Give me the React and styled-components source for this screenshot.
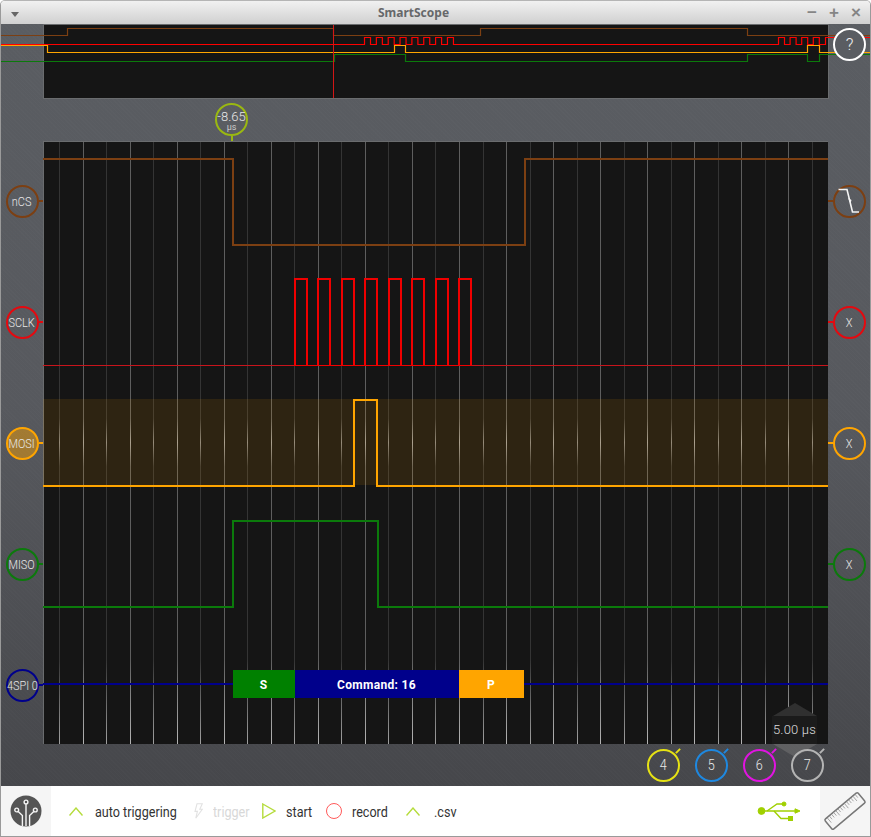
import React from "react";
import styled, { createGlobalStyle } from "styled-components";

const GlobalStyle = createGlobalStyle`
  html, body {
    margin: 0;
    padding: 0;
    background: #fff;
  }
`;

const THIN = `"Roboto", "Liberation Sans", sans-serif`;

const BROWN = "#7c3f12";
const RED = "#f00000";
const ORANGE = "#ffa500";
const GREEN = "#0b7a0b";
const NAVY = "#00008b";
const LIME = "#b5dc3c";

const gridXs = Array.from({ length: 33 }, (_, i) => 59.5 + i * 23.53);

function pulses(start, period, width, count, low, high) {
  let d = "";
  for (let i = 0; i < count; i++) {
    const x = start + i * period;
    d += ` L${x} ${low} L${x} ${high} L${x + width} ${high} L${x + width} ${low}`;
  }
  return d;
}

const overviewTraces = [
  { color: BROWN, d: "M1 35.5 L67.5 35.5 L67.5 28.5 L333.5 28.5 L333.5 35.5 L480.5 35.5 L480.5 28.5 L747.5 28.5 L747.5 35.5 L871 35.5" },
  { color: ORANGE, d: "M1 45.5 L47.5 45.5 L47.5 52.5 L394.5 52.5 L394.5 45.5 L405.5 45.5 L405.5 52.5 L807.5 52.5 L807.5 45.5 L819.5 45.5 L819.5 52.5 L871 52.5" },
  { color: "#f00", d: "M1 44.5" + pulses(364.5, 11.85, 6, 8, 44.5, 37.5) + " L778.5 44.5" + pulses(778.5, 11.6, 6, 4, 44.5, 37.5) + " L825.5 44.5 L825.5 37.5 L871 37.5" },
  { color: GREEN, d: "M1 61.5 L334.5 61.5 L334.5 54.5 L405.5 54.5 L405.5 61.5 L747.5 61.5 L747.5 54.5 L807.5 54.5 L807.5 61.5 L819.5 61.5 L819.5 54.5 L871 54.5" },
];

const scopeTraces = [
  { color: BROWN, d: "M0 18 L190 18 L190 104 L482 104 L482 18 L785 18" },
  { color: ORANGE, d: "M0 345 L311 345 L311 259 L334 259 L334 345 L785 345" },
  { color: GREEN, d: "M0 466 L190 466 L190 380 L335 380 L335 466 L785 466" },
];

// rising and falling edges of the clock burst
const clockEdges = [
  [252, 264], [275, 287], [299, 311], [322, 334],
  [346, 358], [369, 381], [393, 405], [416, 428],
];

const leftChannels = [
  { label: "nCS", color: BROWN },
  { label: "SCLK", color: "#e5090f" },
  { label: "MOSI", color: ORANGE, fill: "rgba(255,165,0,0.45)" },
  { label: "MISO", color: GREEN },
  { label: "4SPI 0", color: NAVY },
];

const decoded = [
  { x: 190, w: 62, color: "#008000", label: "S" },
  { x: 252, w: 164, color: NAVY, label: "Command: 16" },
  { x: 416, w: 65, color: ORANGE, label: "P" },
];

function TriggerEdge() {
  return (
    <svg width="28" height="30" viewBox="0 0 28 30">
      <path d="M3.5 2.5 L12 2.5 L17.5 25 L24 25" fill="none" stroke="#f4f4f4" strokeWidth="1.6" />
      <path d="M13 11 L16.5 13 L15.5 16.5 Z" fill="#f4f4f4" />
    </svg>
  );
}

function LogoIcon() {
  return (
    <svg width="32" height="32" viewBox="0 0 32 32">
      <circle cx="16" cy="16" r="15.5" fill="#555" />
      <g fill="none" stroke="#f5f5f5" strokeWidth="1.4">
        <circle cx="16" cy="7" r="1.9" />
        <circle cx="6.7" cy="15" r="1.9" />
        <circle cx="25.3" cy="15" r="1.9" />
        <path d="M16 9 L16 31" />
        <path d="M8.2 16.5 L12.4 20.5 L12.4 31" />
        <path d="M23.8 16.5 L19.6 20.5 L19.6 31" />
      </g>
    </svg>
  );
}

function UsbIcon() {
  return (
    <svg width="44" height="26" viewBox="0 0 44 26">
      <g fill="#a0d000" stroke="#a0d000">
        <circle cx="4.5" cy="13" r="3.4" />
        <path d="M4 13 L40 13" strokeWidth="1.4" />
        <path d="M38 10.8 L43 13 L38 15.2 Z" />
        <path d="M10 13 L20 6 L26 6" fill="none" strokeWidth="1.4" />
        <circle cx="27" cy="6" r="2" />
        <path d="M17 13 L24 20.5 L31 20.5" fill="none" strokeWidth="1.4" />
        <rect x="31.5" y="18.5" width="4" height="4" />
      </g>
    </svg>
  );
}

function RulerIcon() {
  const ticks = Array.from({ length: 14 }, (_, i) => i);
  return (
    <svg width="44" height="44" viewBox="0 0 44 44">
      <g transform="rotate(-40 22 22)">
        <rect x="0.5" y="15.5" width="43" height="13" rx="1.5" fill="none" stroke="#777" strokeWidth="1.5" />
        {ticks.map((i) => (
          <path key={i} d={`M${4 + i * 2.8} 16 L${4 + i * 2.8} ${i % 4 === 0 ? 22 : 20}`} stroke="#999" strokeWidth="0.8" />
        ))}
      </g>
    </svg>
  );
}

function Chevron({ gap }) {
  return (
    <Glyph $gap={gap} width="14" height="9" viewBox="0 0 14 9">
      <path d="M0.5 8.5 L7 1 L13.5 8.5" fill="none" stroke={LIME} strokeWidth="1.4" />
    </Glyph>
  );
}

function App() {
  return (
    <>
      <GlobalStyle />
      <Window>
        <TitleBar>
          <MenuArrow />
          <Title>SmartScope</Title>
          <WindowButtons>
            <WindowButton>−</WindowButton>
            <WindowButton>+</WindowButton>
            <WindowButton>×</WindowButton>
          </WindowButtons>
        </TitleBar>

        <Stage>
          <Overview>
            <OverviewSvg width="871" height="75" viewBox="0 24 871 75">
              <rect x="43.5" y="24.5" width="785" height="74" fill="#151515" stroke="#6a6c6e" />
              {overviewTraces.map((t) => (
                <path key={t.color} d={t.d} fill="none" stroke={t.color} strokeWidth="1.2" />
              ))}
              <path d="M333.5 25 L333.5 98" stroke="#d21616" strokeWidth="1" />
            </OverviewSvg>
            <HelpButton>?</HelpButton>
          </Overview>

          <CursorRow>
            <CursorBadge>
              <strong>-8.65</strong>
              <small>µs</small>
            </CursorBadge>
          </CursorRow>

          <ScopeRow>
            <ChannelColumn>
              {leftChannels.map((c) => (
                <ChannelKnob key={c.label} $color={c.color} $fill={c.fill} $side="right">
                  <Squeezed>{c.label}</Squeezed>
                </ChannelKnob>
              ))}
            </ChannelColumn>

            <Plot>
              <svg width="785" height="603" viewBox="0 0 785 603">
                <defs>
                  <linearGradient id="gridLine" x1="0" y1="0" x2="0" y2="1">
                    <stop offset="0" stopColor="#5e5e5e" />
                    <stop offset="0.46" stopColor="#5e5e5e" />
                    <stop offset="0.5" stopColor="#a0a0a0" />
                    <stop offset="0.54" stopColor="#5e5e5e" />
                    <stop offset="0.86" stopColor="#5e5e5e" />
                    <stop offset="1" stopColor="#b4b4b4" />
                  </linearGradient>
                  <linearGradient id="gridLineDim" x1="0" y1="0" x2="0" y2="1">
                    <stop offset="0" stopColor="#343434" />
                    <stop offset="0.46" stopColor="#343434" />
                    <stop offset="0.5" stopColor="#888" />
                    <stop offset="0.54" stopColor="#343434" />
                    <stop offset="0.86" stopColor="#343434" />
                    <stop offset="1" stopColor="#a0a0a0" />
                  </linearGradient>
                </defs>
                <rect width="785" height="603" fill="#151515" />
                {gridXs.map((x, i) => (
                  <rect
                    key={x}
                    x={Math.floor(x) - 43}
                    y="0"
                    width="1"
                    height="603"
                    fill={i % 2 ? "url(#gridLine)" : "url(#gridLineDim)"}
                  />
                ))}
                <rect x="0" y="0" width="785" height="1" fill="#6a6c6e" />
                <rect x="0" y="0" width="1" height="603" fill="#6a6c6e" />
                <rect x="0" y="258" width="785" height="86" fill="rgba(255,165,0,0.11)" />
                <path d="M0 224.5 L785 224.5" stroke="#c8141c" />
                <path d="M252 224.5 L428 224.5" stroke={RED} />
                {scopeTraces.map((t) => (
                  <path key={t.color} d={t.d} fill="none" stroke={t.color} strokeWidth="2" />
                ))}
                {clockEdges.map(([a, b]) => (
                  <path key={a} d={`M${a} 225 L${a} 138 L${b} 138 L${b} 225`} fill="none" stroke={RED} strokeWidth="2" />
                ))}
                <path d="M0 543 L785 543" stroke={NAVY} strokeWidth="2" />
                {decoded.map((s) => (
                  <g key={s.label}>
                    <rect x={s.x} y="529" width={s.w} height="28" fill={s.color} />
                    <DecodeText x={s.x + s.w / 2 - 0.5} y="547.5" textAnchor="middle">
                      {s.label}
                    </DecodeText>
                  </g>
                ))}
              </svg>
              <TimeScale>
                <ScaleArrowUp />
                <ScaleValue>5.00 µs</ScaleValue>
                <ScaleArrowDown />
              </TimeScale>
            </Plot>

            <ChannelColumn>
              <ChannelKnob $color={BROWN} $side="left">
                <TriggerEdge />
              </ChannelKnob>
              <ChannelKnob $color="#e5090f" $side="left"><Squeezed>X</Squeezed></ChannelKnob>
              <ChannelKnob $color={ORANGE} $side="left"><Squeezed>X</Squeezed></ChannelKnob>
              <ChannelKnob $color={GREEN} $side="left"><Squeezed>X</Squeezed></ChannelKnob>
              <KnobSpacer />
            </ChannelColumn>
          </ScopeRow>

          <AnalogRow>
            <AnalogKnob $color="#e6e214"><Squeezed>4</Squeezed></AnalogKnob>
            <AnalogKnob $color="#1e88e0"><Squeezed>5</Squeezed></AnalogKnob>
            <AnalogKnob $color="#e014e0"><Squeezed>6</Squeezed></AnalogKnob>
            <AnalogKnob $color="#b4b4b4"><Squeezed>7</Squeezed></AnalogKnob>
          </AnalogRow>
        </Stage>

        <Toolbar>
          <IconTile>
            <LogoIcon />
          </IconTile>
          <Actions>
            <Action $width={125}>
              <Chevron gap={12} />
              <ActionLabel>auto triggering</ActionLabel>
            </Action>
            <Action $width={68} $disabled>
              <Glyph $gap={10} viewBox="0 0 9 16" width="9" height="16">
                <path d="M3 0.8 L8.3 0.8 L5.8 6.2 L8.3 6.2 L1.8 15.2 L3.4 8.4 L1 8.4 Z" fill="none" stroke="#e2e2e2" strokeWidth="1.1" />
              </Glyph>
              <ActionLabel>trigger</ActionLabel>
            </Action>
            <Action $width={64}>
              <Glyph $gap={10} viewBox="0 0 14 16" width="14" height="16">
                <path d="M0.8 1 L13 8 L0.8 15 Z" fill="none" stroke={LIME} strokeWidth="1.4" />
              </Glyph>
              <ActionLabel>start</ActionLabel>
            </Action>
            <Action $width={80}>
              <RecordGlyph />
              <ActionLabel>record</ActionLabel>
            </Action>
            <Action>
              <Chevron gap={14} />
              <ActionLabel>.csv</ActionLabel>
            </Action>
          </Actions>
          <UsbSlot>
            <UsbIcon />
          </UsbSlot>
          <IconTile>
            <RulerIcon />
          </IconTile>
        </Toolbar>
      </Window>
    </>
  );
}

const Window = styled.div`
  width: 871px;
  height: 837px;
  box-sizing: border-box;
  display: flex;
  flex-direction: column;
  overflow: hidden;
  border: 1px solid #9a9a9a;
  border-top-color: #b5b5b5;
  border-radius: 5px 5px 0 0;
  background: #fff;
`;

const TitleBar = styled.div`
  position: relative;
  flex: 0 0 23px;
  box-sizing: border-box;
  padding-right: 44px;
  display: flex;
  align-items: center;
  justify-content: center;
  background: linear-gradient(#f1f1f1, #d0d0d0);
`;

const MenuArrow = styled.span`
  position: absolute;
  left: 10px;
  top: 11px;
  border-left: 4px solid transparent;
  border-right: 4px solid transparent;
  border-top: 5px solid #666;
`;

const Title = styled.div`
  font: 700 12px "Noto Sans", "Open Sans", sans-serif;
  color: #66686a;
`;

const WindowButtons = styled.div`
  position: absolute;
  right: 3px;
  top: 0;
  height: 100%;
  display: flex;
`;

const WindowButton = styled.span`
  width: 22px;
  text-align: center;
  font: 700 17px/24px "Liberation Sans", sans-serif;
  color: #858585;
`;

const Stage = styled.div`
  flex: 1;
  position: relative;
  overflow: hidden;
  background:
    repeating-linear-gradient(45deg, rgba(255, 255, 255, 0.012) 0 1px, transparent 1px 3px),
    linear-gradient(#5a5d62, #57595e 50%, #46474b);
`;

const Overview = styled.div`
  position: relative;
  height: 75px;
`;

const OverviewSvg = styled.svg`
  position: absolute;
  left: -1px;
  top: 0;
`;

const HelpButton = styled.div`
  position: absolute;
  left: 832px;
  top: 4px;
  box-sizing: border-box;
  width: 33px;
  height: 33px;
  border: 2px solid #fff;
  border-radius: 50%;
  background: #5a5d62;
  text-align: center;
  font: 300 17px/28px ${THIN};
  color: #eee;
`;

const CursorRow = styled.div`
  height: 42px;
  box-sizing: border-box;
  padding: 4px 0 0 214px;
`;

const CursorBadge = styled.div`
  position: relative;
  box-sizing: border-box;
  width: 33px;
  height: 33px;
  border: 2px solid #9ab811;
  border-radius: 50%;
  display: flex;
  flex-direction: column;
  align-items: center;
  color: #e6e6e6;
  font-family: ${THIN};

  strong {
    font-weight: 300;
    font-size: 13px;
    line-height: 12px;
    margin-top: 6px;
    white-space: nowrap;
  }

  small {
    font-size: 9px;
    line-height: 8px;
    color: #ccc;
  }

  &::after {
    content: "";
    position: absolute;
    left: 14px;
    top: 31px;
    width: 2px;
    height: 6px;
    background: #9ab811;
  }
`;

const ScopeRow = styled.div`
  display: flex;
  height: 603px;
`;

const ChannelColumn = styled.div`
  flex: 1;
  display: flex;
  flex-direction: column;
  align-items: center;
  padding-top: 44px;
  gap: 88px;
`;

const ChannelKnob = styled.div`
  position: relative;
  flex: 0 0 33px;
  box-sizing: border-box;
  width: 33px;
  height: 33px;
  border: 2px solid ${(p) => p.$color};
  border-radius: 50%;
  background: ${(p) => p.$fill || "transparent"};
  display: flex;
  align-items: center;
  justify-content: center;
  white-space: nowrap;
  font: 300 13px ${THIN};
  color: #e8e8e8;

  &::after {
    content: "";
    position: absolute;
    top: 13px;
    ${(p) => p.$side}: -7px;
    width: 5px;
    height: 2px;
    background: ${(p) => p.$color};
  }
`;

const Squeezed = styled.span`
  display: inline-block;
  transform: scaleX(0.84);
`;

const KnobSpacer = styled.div`
  height: 33px;
`;

const Plot = styled.div`
  position: relative;
  flex: 0 0 785px;
  height: 603px;

  svg {
    display: block;
  }
`;

const DecodeText = styled.text`
  font: 700 12px "Roboto", "Liberation Sans", sans-serif;
  fill: #fff;
  letter-spacing: 0.3px;
`;

const TimeScale = styled.div`
  position: absolute;
  right: 11px;
  bottom: -13px;
  width: 45px;
  display: flex;
  flex-direction: column;
  align-items: center;
`;

const ScaleArrowUp = styled.span`
  border-left: 22px solid transparent;
  border-right: 22px solid transparent;
  border-bottom: 13px solid #303030;
`;

const ScaleArrowDown = styled.span`
  border-left: 22px solid transparent;
  border-right: 22px solid transparent;
  border-top: 13px solid rgba(120, 120, 120, 0.5);
`;

const ScaleValue = styled.div`
  width: 45px;
  height: 28px;
  background: #1b1b1b;
  white-space: nowrap;
  text-align: center;
  font: 300 13px/28px ${THIN};
  letter-spacing: 0.2px;
  color: #ddd;
`;

const AnalogRow = styled.div`
  height: 42px;
  display: flex;
  justify-content: flex-end;
  align-items: center;
  gap: 15px;
  padding-right: 46px;
`;

const AnalogKnob = styled.div`
  position: relative;
  box-sizing: border-box;
  width: 33px;
  height: 33px;
  border: 2px solid ${(p) => p.$color};
  border-radius: 50%;
  display: flex;
  align-items: center;
  justify-content: center;
  font: 300 15px ${THIN};
  color: #e8e8e8;

  &::after {
    content: "";
    position: absolute;
    top: -3px;
    right: -1px;
    width: 2px;
    height: 6px;
    background: ${(p) => p.$color};
    transform: rotate(45deg);
  }
`;

const Toolbar = styled.div`
  flex: 0 0 50px;
  display: flex;
  align-items: stretch;
  background: #fff;
`;

const IconTile = styled.div`
  flex: 0 0 50px;
  display: flex;
  align-items: center;
  justify-content: center;
  background: #f5f5f5;
`;

const Actions = styled.div`
  flex: 1;
  display: flex;
  align-items: center;
  padding-left: 18px;
`;

const Action = styled.div`
  display: flex;
  align-items: center;
  width: ${(p) => (p.$width ? `${p.$width}px` : "auto")};
  color: ${(p) => (p.$disabled ? "#d8d8d8" : "#333")};
`;

const ActionLabel = styled.span`
  display: inline-block;
  padding-top: 2px;
  white-space: nowrap;
  font: 400 15px ${THIN};
  transform: scaleX(0.84);
  transform-origin: left center;
`;

const Glyph = styled.svg`
  flex: none;
  margin-right: ${(p) => p.$gap}px;
`;

const RecordGlyph = styled.span`
  flex: none;
  box-sizing: border-box;
  width: 16px;
  height: 16px;
  margin-right: 10px;
  border: 1.5px solid #ff5a5a;
  border-radius: 50%;
`;

const UsbSlot = styled.div`
  display: flex;
  align-items: center;
  padding-right: 19px;
`;

export default App;
